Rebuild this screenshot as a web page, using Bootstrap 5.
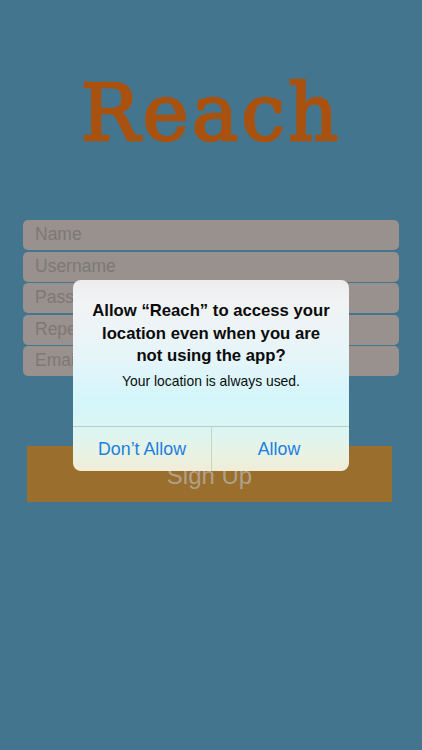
<!DOCTYPE html>
<html lang="en"><head><meta charset="utf-8"><title>Reach</title>
<link rel="stylesheet" href="https://cdn.jsdelivr.net/npm/bootstrap@5.3.0/dist/css/bootstrap.min.css">
<style>
html,body{height:100%}
body{background:#44758f;font-family:"Liberation Sans",Arial,sans-serif;overflow:hidden}
.screen{height:750px;width:422px;padding-top:69px}
.logo{font-family:"DejaVu Serif",serif;font-weight:400;font-size:78px;line-height:88px;color:#a9520f;text-align:center;margin:0 0 63px 0;height:88px;-webkit-text-stroke:2.4px #a9520f;letter-spacing:3px}
.fields{padding:0 23px;gap:1.5px}
.field{height:30px;background:#98918d;border:0;border-radius:5px;padding:0 12px;font-size:17.5px;color:#7d7876;line-height:29px}
.signup{margin:70px 30px 0 27px;height:56px;background:#9a6e2c;color:#b0a18a;font-size:24px;line-height:60px;text-align:center}
.alert-box{position:absolute;left:73px;top:280px;width:276px;height:191px;border-radius:8px;overflow:hidden;
 background:linear-gradient(180deg,#ececed 0,#f1f3f4 12%,#e6f5f9 40%,#d3f6fb 62%,#ddf5f1 80%,#eaf2e2 92%,#f1ecd8 100%)}
.alert-main{height:146px;padding:20px 16px 0;text-align:center;color:#0b0b0b}
.alert-title{font-size:16.7px;font-weight:700;line-height:22.5px;margin:0 0 3px}
.alert-msg{font-size:13.9px;line-height:20px;margin:0}
.alert-actions{height:45px;border-top:1px solid #a9d2d0}
.alert-btn{flex:0 0 50%;background:none;border:0;padding:0;color:#1c7fe0;font-size:17.8px;line-height:45px}
.alert-btn+.alert-btn{border-left:1px solid #c3d6c2;text-indent:-3px}
</style></head>
<body>
<main class="screen position-relative">
  <h1 class="logo">Reach</h1>
  <div class="fields d-flex flex-column">
    <div class="field">Name</div>
    <div class="field">Username</div>
    <div class="field">Pass</div>
    <div class="field">Repe</div>
    <div class="field">Emai</div>
  </div>
  <div class="signup">Sign Up</div>
  <div class="alert-box d-flex flex-column" role="alertdialog">
    <div class="alert-main">
      <p class="alert-title">Allow “Reach” to access your location even when you are not using the app?</p>
      <p class="alert-msg">Your location is always used.</p>
    </div>
    <div class="alert-actions d-flex">
      <button class="alert-btn">Don’t Allow</button>
      <button class="alert-btn">Allow</button>
    </div>
  </div>
</main>
<script src="https://cdn.jsdelivr.net/npm/bootstrap@5.3.0/dist/js/bootstrap.bundle.min.js"></script>
</body></html>
